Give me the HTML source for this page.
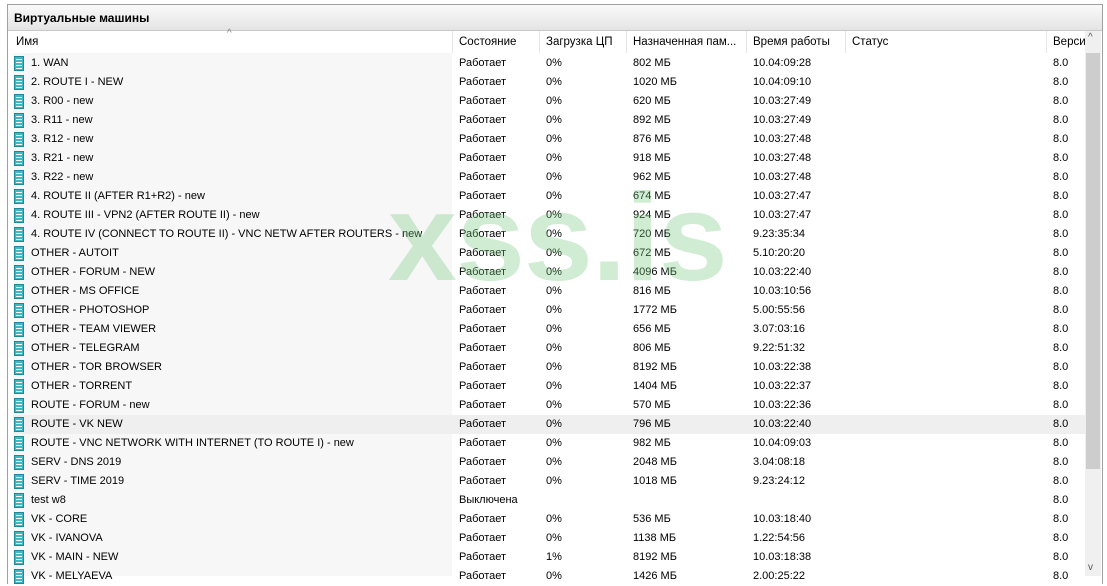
<!DOCTYPE html>
<html><head><meta charset="utf-8"><style>
*{margin:0;padding:0;box-sizing:border-box}
body{width:1107px;height:576px;overflow:hidden;background:#fff;font-family:"Liberation Sans",sans-serif;font-size:12px;color:#000;position:relative}
.frame{position:absolute;left:7px;top:4px;width:1096px;height:580px;border:1px solid #a0a0a0;border-bottom:none}
.title{position:absolute;left:8px;top:5px;width:1094px;height:26px;background:linear-gradient(#fafafa,#e4e4e4);border-bottom:1px solid #c8c8c8;font-weight:bold;padding:6px 0 0 6px;font-size:12px}
.hdr{position:absolute;top:31px;height:22px;left:8px;width:1077px;font-size:11.5px}
.hdr div{position:absolute;top:5px}
.sep{position:absolute;top:31px;height:22px;width:1px;background:#e5e5e5}
.namebg{position:absolute;left:13px;top:53px;width:439px;height:523px;background:#f7f7f7}
.row{position:absolute;left:0;width:1085px;height:19px;line-height:19px;font-size:11px}
.row span{position:absolute;top:0;white-space:nowrap}
.hl{background:#efefef;left:13px!important;width:1072px!important}
.ic{position:absolute;left:14px;top:2px;width:10px;height:15px;background:#3fb8c4;border:1px solid #1d8a96}
.ic:before{content:"";position:absolute;left:1px;top:2px;width:6px;height:1px;background:#fff;box-shadow:0 3px #fff,0 6px #fff,0 9px #fff}
.sb{position:absolute;left:1085px;top:31px;width:16px;height:545px;background:#f0f0f0}
.th{position:absolute;left:1086px;top:53px;width:14px;height:416px;background:#cdcdcd}
.wm{position:absolute;left:388px;top:176px;font-size:124px;font-weight:bold;color:rgba(120,200,130,0.35);letter-spacing:-1px;line-height:1}
</style></head><body>
<div class="frame"></div>
<div class="title">Виртуальные машины</div>
<div class="namebg"></div>
<div class="hdr">
<div style="left:8px">Имя</div><div style="left:451px">Состояние</div><div style="left:538px">Загрузка ЦП</div><div style="left:625px">Назначенная пам...</div><div style="left:745px">Время работы</div><div style="left:844px">Статус</div><div style="left:1045px">Верси</div>
<div style="left:219px;top:-3px;font-size:10px;color:#888">^</div>
</div>
<div class="sep" style="left:452px"></div><div class="sep" style="left:539px"></div><div class="sep" style="left:626px"></div><div class="sep" style="left:746px"></div><div class="sep" style="left:845px"></div><div class="sep" style="left:1046px"></div>
<div id="rows"></div>
<div class="sb"></div><div class="th"></div>
<div style="position:absolute;left:1088px;top:32px;font-size:10px;color:#555">^</div>
<div style="position:absolute;left:1088px;top:562px;font-size:10px;color:#555">v</div>
<div class="wm">xss.is</div>
<script>
var d=[["1. WAN","Работает","0%","802 МБ","10.04:09:28"],["2. ROUTE I - NEW","Работает","0%","1020 МБ","10.04:09:10"],["3. R00 - new","Работает","0%","620 МБ","10.03:27:49"],["3. R11 - new","Работает","0%","892 МБ","10.03:27:49"],["3. R12 - new","Работает","0%","876 МБ","10.03:27:48"],["3. R21 - new","Работает","0%","918 МБ","10.03:27:48"],["3. R22 - new","Работает","0%","962 МБ","10.03:27:48"],["4. ROUTE II (AFTER R1+R2) - new","Работает","0%","674 МБ","10.03:27:47"],["4. ROUTE III - VPN2 (AFTER ROUTE II) - new","Работает","0%","924 МБ","10.03:27:47"],["4. ROUTE IV (CONNECT TO ROUTE II) - VNC NETW AFTER ROUTERS - new","Работает","0%","720 МБ","9.23:35:34"],["OTHER - AUTOIT","Работает","0%","672 МБ","5.10:20:20"],["OTHER - FORUM - NEW","Работает","0%","4096 МБ","10.03:22:40"],["OTHER - MS OFFICE","Работает","0%","816 МБ","10.03:10:56"],["OTHER - PHOTOSHOP","Работает","0%","1772 МБ","5.00:55:56"],["OTHER - TEAM VIEWER","Работает","0%","656 МБ","3.07:03:16"],["OTHER - TELEGRAM","Работает","0%","806 МБ","9.22:51:32"],["OTHER - TOR BROWSER","Работает","0%","8192 МБ","10.03:22:38"],["OTHER - TORRENT","Работает","0%","1404 МБ","10.03:22:37"],["ROUTE - FORUM - new","Работает","0%","570 МБ","10.03:22:36"],["ROUTE - VK NEW","Работает","0%","796 МБ","10.03:22:40"],["ROUTE - VNC NETWORK WITH INTERNET (TO ROUTE I) - new","Работает","0%","982 МБ","10.04:09:03"],["SERV - DNS 2019","Работает","0%","2048 МБ","3.04:08:18"],["SERV - TIME 2019","Работает","0%","1018 МБ","9.23:24:12"],["test w8","Выключена","","",""],["VK - CORE","Работает","0%","536 МБ","10.03:18:40"],["VK - IVANOVA","Работает","0%","1138 МБ","1.22:54:56"],["VK - MAIN - NEW","Работает","1%","8192 МБ","10.03:18:38"],["VK - MELYAEVA","Работает","0%","1426 МБ","2.00:25:22"]];
var h="";d.forEach(function(r,i){var t=54+19*i;
if(i==19)h+='<div class="row hl" style="top:'+t+'px"></div>';
h+='<div class="row" style="top:'+t+'px"><i class="ic"></i><span style="left:31px">'+r[0]+'</span><span style="left:459px">'+r[1]+'</span><span style="left:546px">'+r[2]+'</span><span style="left:633px">'+r[3]+'</span><span style="left:753px">'+r[4]+'</span><span style="left:1053px">8.0</span></div>';});
document.getElementById("rows").innerHTML=h;
</script>
</body></html>
